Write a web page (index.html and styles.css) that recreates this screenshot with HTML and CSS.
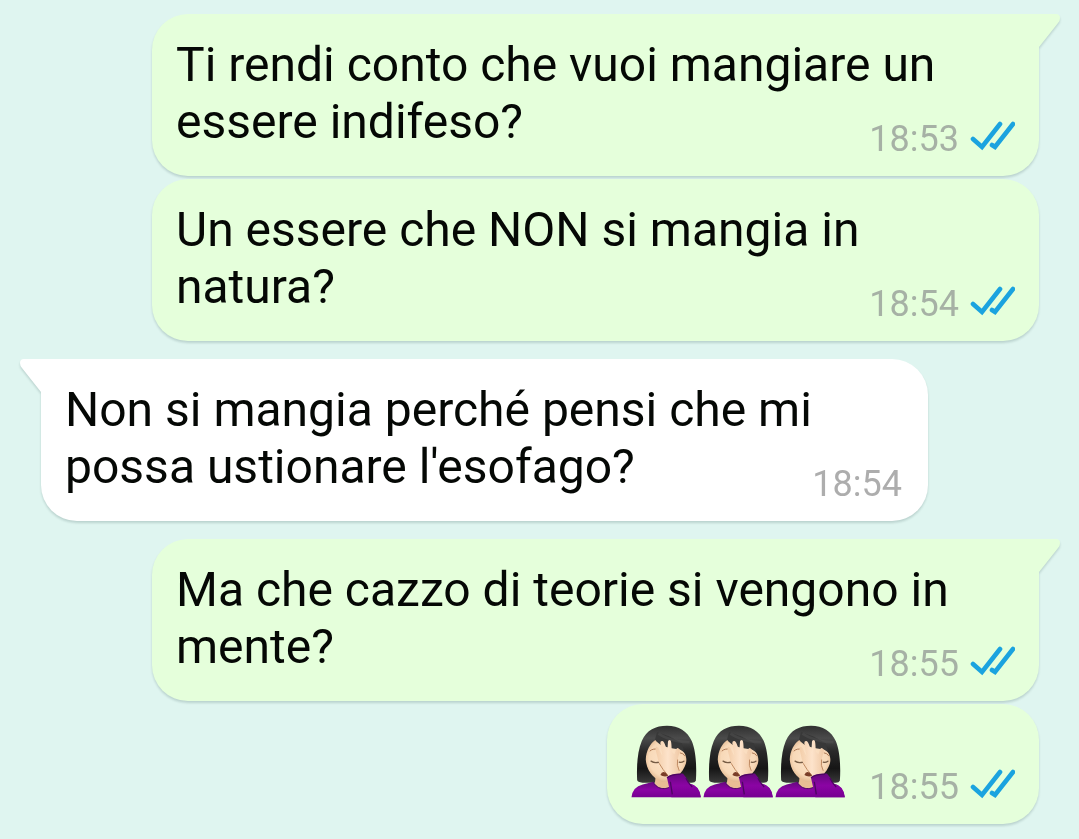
FILE: index.html
```html
<!DOCTYPE html>
<html lang="it">
<head>
<meta charset="utf-8">
<meta name="viewport" content="width=device-width, initial-scale=1">
<title>Chat</title>
<link rel="stylesheet" href="styles.css">
</head>
<body>
<svg class="defs" aria-hidden="true">
  <defs>
    <linearGradient id="hair" x1="0" y1="0" x2="0" y2="1">
      <stop offset="0" stop-color="#303030"/><stop offset=".22" stop-color="#4b4b4b"/><stop offset=".45" stop-color="#292929"/><stop offset=".75" stop-color="#161616"/><stop offset="1" stop-color="#3a3a3a"/>
    </linearGradient>
    <radialGradient id="face" cx=".5" cy=".45" r=".6">
      <stop offset="0" stop-color="#fde5cc"/><stop offset=".7" stop-color="#f8d9b8"/><stop offset="1" stop-color="#dcae83"/>
    </radialGradient>
    <linearGradient id="hand" x1="0" y1="0" x2="1" y2="0">
      <stop offset="0" stop-color="#f3cda8"/><stop offset=".5" stop-color="#fde3cb"/><stop offset="1" stop-color="#efc8a4"/>
    </linearGradient>
    <linearGradient id="shirt" x1="0" y1="0" x2="0" y2="1">
      <stop offset="0" stop-color="#65077d"/><stop offset=".5" stop-color="#8b04a4"/><stop offset="1" stop-color="#760091"/>
    </linearGradient>
    <symbol id="facepalm" viewBox="34 28 216 220">
      <path fill="url(#hair)" d="M52 194C50 151 53 107 66 76C80 43 108 30 142 30C178 30 203 46 217 77C229 106 232 154 229 196Q226 204 211 202L68 202Q53 201 52 194Z"/>
      <path fill="#e9bd94" d="M109 175H159V218Q134 230 104 214Z"/>
      <path fill="url(#face)" d="M107 73C91 84 79 105 78 132C80 161 96 187 127 199C161 200 190 174 199 144C204 124 195 107 181 100C153 96 124 86 107 73Z"/>
      <path fill="#383838" d="M106 72C116 88 137 98 181 102L194 110L187 83L148 62L112 49Z"/>
      <path fill="none" stroke="#5d5d5d" stroke-width="8" opacity=".35" d="M116 54Q153 79 210 80"/>
      <path fill="none" stroke="#ad7955" stroke-width="3" stroke-linecap="round" d="M91 106Q99 98 114 101M182 112Q191 113 195 120"/>
      <path fill="none" stroke="#765c45" stroke-width="4" stroke-linecap="round" d="M94 137Q104 144 118 140M179 140Q186 142 193 137"/>
      <path fill="url(#shirt)" d="M35 246Q38 214 69 207L101 199C112 223 145 226 163 204L210 204Q239 211 244 246Z"/>
      <path fill="none" stroke="#4d0a62" stroke-width="3" d="M101 200C112 224 145 227 163 204"/>
      <path fill="url(#hand)" d="M146 189C142 175 124 154 116 137L108 103Q106 93 112 94Q117 95 121 108L128 121L122 84Q121 75 128 76Q134 78 138 93L143 109L145 78Q147 70 153 75Q156 80 156 108L164 116L170 100Q175 94 180 102Q182 109 177 120L173 137L182 176L149 191Z"/>
      <path fill="none" stroke="#c08a62" stroke-width="3" d="M118 143Q130 164 144 179M174 132Q170 150 179 166"/>
      <path fill="#7a3d28" d="M122 179Q127 165 138 172L146 182Q130 185 122 179Z"/>
      <path fill="url(#shirt)" d="M142 187Q147 177 178 175L190 174Q202 186 208 204Q241 209 244 246H155Z"/>
      <path fill="none" stroke="#4c0661" stroke-width="4" d="M142 187Q154 177 184 176M152 199L158 237M199 188Q207 204 218 215"/>
    </symbol>
    <symbol id="ticks" viewBox="0 0 46 32">
      <path fill="none" stroke="#1ba3df" stroke-width="4.6" stroke-linecap="round" stroke-linejoin="miter" d="M4 19L13 27L31 4M23 25L26 27L44 4"/>
    </symbol>
    <symbol id="tail" viewBox="0 0 24 34">
      <path fill="currentColor" d="M0 0H17Q21 0 21 4Q21 7 19 9L0 33Z"/>
    </symbol>
  </defs>
</svg>
<main class="chat">
  <article class="bubble out">
    <svg class="tail" aria-hidden="true"><use href="#tail"/></svg>
    <p class="text">Ti rendi conto che vuoi mangiare un<br>essere indifeso?</p>
    <div class="meta"><time>18:53</time><svg class="ticks" role="img" aria-label="Letto"><use href="#ticks"/></svg></div>
  </article>
  <article class="bubble out">
    <p class="text">Un essere che NON si mangia in<br>natura?</p>
    <div class="meta"><time>18:54</time><svg class="ticks" role="img" aria-label="Letto"><use href="#ticks"/></svg></div>
  </article>
  <article class="bubble in turn">
    <svg class="tail" aria-hidden="true"><use href="#tail"/></svg>
    <p class="text">Non si mangia perché pensi che mi<br>possa ustionare l'esofago?</p>
    <div class="meta"><time>18:54</time></div>
  </article>
  <article class="bubble out turn">
    <svg class="tail" aria-hidden="true"><use href="#tail"/></svg>
    <p class="text">Ma che cazzo di teorie si vengono in<br>mente?</p>
    <div class="meta"><time>18:55</time><svg class="ticks" role="img" aria-label="Letto"><use href="#ticks"/></svg></div>
  </article>
  <article class="bubble out compact">
    <div class="emojis">
      <svg class="emoji" role="img" aria-label="Donna che si copre il viso"><use href="#facepalm"/></svg>
      <svg class="emoji" role="img" aria-label="Donna che si copre il viso"><use href="#facepalm"/></svg>
      <svg class="emoji" role="img" aria-label="Donna che si copre il viso"><use href="#facepalm"/></svg>
    </div>
    <div class="meta"><time>18:55</time><svg class="ticks" role="img" aria-label="Letto"><use href="#ticks"/></svg></div>
  </article>
</main>
</body>
</html>
```
FILE: styles.css
```css
* {
  box-sizing: border-box;
}

body {
  margin: 0;
  background: #dff5f0;
  color: #050805;
  font-family: Roboto, "Liberation Sans", sans-serif;
}

.defs {
  position: absolute;
  width: 0;
  height: 0;
}

.chat {
  display: flex;
  flex-direction: column;
  gap: 3px;
  padding: 14px 40px 14px 41px;
}

.bubble {
  position: relative;
  display: grid;
  padding: 22px 24px 17px;
  border-radius: 36px;
  filter: drop-shadow(0 2px 1px rgb(0 40 40 / 16%));
}

.out {
  margin-left: 111px;
  background: #e5ffdb;
  color: #e5ffdb;
}

.in {
  margin-right: 111px;
  background: #fff;
  color: #fff;
}

.turn {
  margin-top: 15px;
}

.out:has(.tail) {
  border-top-right-radius: 0;
}

.in:has(.tail) {
  border-top-left-radius: 0;
}

.tail {
  position: absolute;
  top: 0;
  left: 100%;
  width: 24px;
  height: 34px;
}

.in .tail {
  left: auto;
  right: 100%;
  transform: scaleX(-1);
}

.text {
  grid-area: 1 / 1;
  margin: 0;
  padding-bottom: 9px;
  color: #050805;
  font-size: 48px;
  line-height: 57px;
}

.meta {
  grid-area: 1 / 1;
  place-self: end;
  display: flex;
  align-items: center;
  gap: 10px;
  color: #a6b1a5;
  font-size: 36px;
  line-height: 40px;
}

.in .meta {
  padding-right: 2px;
  color: #adadad;
}

.ticks {
  width: 46px;
  height: 32px;
  margin-bottom: 6px;
}

.compact {
  display: flex;
  align-self: flex-end;
  gap: 22px;
  padding-top: 21px;
  margin-left: 0;
}

.compact .meta {
  align-self: flex-end;
}

.emojis {
  display: flex;
  padding-bottom: 9px;
}

.emoji {
  width: 72px;
  height: 73px;
}
```
